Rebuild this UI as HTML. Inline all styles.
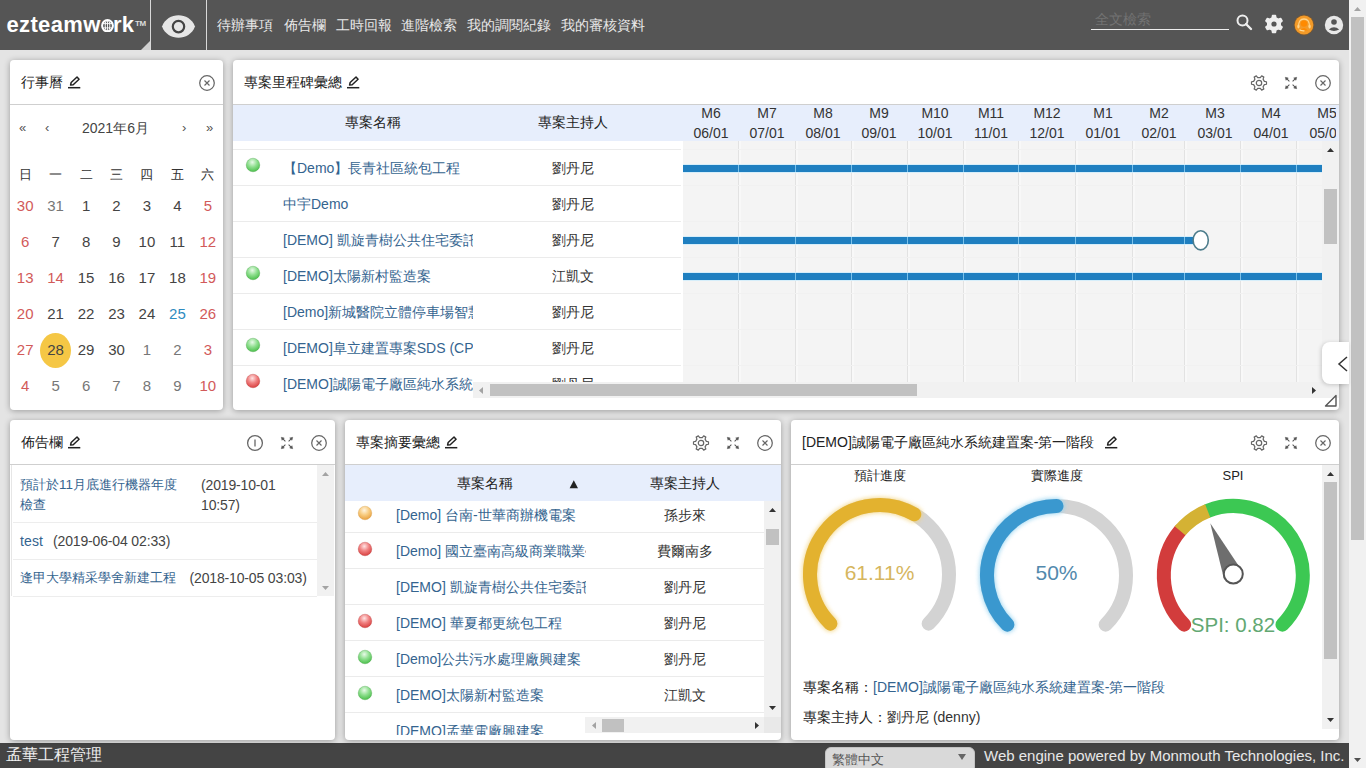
<!DOCTYPE html><html><head><meta charset="utf-8"><style>
*{box-sizing:border-box}
html,body{margin:0;padding:0}
body{width:1366px;height:768px;overflow:hidden;position:relative;background:#e4e4e4;font-family:"Liberation Sans",sans-serif;color:#333;font-size:14px}
.a{position:absolute;white-space:nowrap}
.sep{position:absolute;top:0;width:1px;height:50px;background:#d8d8d8}
.nav{position:absolute;top:17px;font-size:14px;line-height:16px;color:#e8e8e8;white-space:nowrap}
.panel{position:absolute;background:#fff;border-radius:4px;box-shadow:0 1px 6px rgba(0,0,0,.32)}
.t{position:absolute;white-space:nowrap;line-height:18px}
.c{text-align:center}
.lnk{color:#34648f}
</style></head><body>
<div class="a" style="left:0;top:0;width:1349px;height:50px;background:#555"></div>
<div class="a" style="left:6.5px;top:12px;font-size:22px;font-weight:bold;color:#fff;letter-spacing:0.35px;line-height:25px">ezteamw</div>
<svg class="a" style="left:100.5px;top:18.5px" width="13" height="13.5" viewBox="0 0 13 13.5"><ellipse cx="6.5" cy="6.75" rx="5.4" ry="5.7" fill="none" stroke="#fff" stroke-width="2"/><ellipse cx="6.5" cy="6.75" rx="2.3" ry="5.2" fill="none" stroke="#fff" stroke-width="1"/><path d="M1.5 4.6 L11.5 4.6 M1.5 8.9 L11.5 8.9 M6.5 1 L6.5 12.5" stroke="#fff" stroke-width="0.9"/></svg>
<div class="a" style="left:113px;top:12px;font-size:22px;font-weight:bold;color:#fff;letter-spacing:0.2px;line-height:25px">rk</div>
<div class="a" style="left:135px;top:19.5px;font-size:8px;font-weight:bold;color:#ddd;line-height:8px;letter-spacing:-0.3px">TM</div>
<svg class="a" style="left:141px;top:41px" width="9" height="9"><path d="M9 0 L9 9 L0 9 Z" fill="#d0d0d0"/></svg>
<div class="sep" style="left:150px"></div>
<svg class="a" style="left:160px;top:13px;overflow:visible" width="37" height="27" viewBox="0 0 37 27"><path d="M2 13.5 C7.5 -1.5 29.5 -1.5 35 13.5 C29.5 28.5 7.5 28.5 2 13.5 Z" fill="#e6e6e6"/><circle cx="18.5" cy="13.6" r="5.7" fill="none" stroke="#444" stroke-width="2.2"/></svg>
<div class="sep" style="left:206px"></div>
<div class="nav" style="left:217px">待辦事項</div>
<div class="nav" style="left:284px">佈告欄</div>
<div class="nav" style="left:336px">工時回報</div>
<div class="nav" style="left:401px">進階檢索</div>
<div class="nav" style="left:467px">我的調閱紀錄</div>
<div class="nav" style="left:561px">我的審核資料</div>
<div class="a" style="left:1095px;top:11px;font-size:14px;line-height:16px;color:#727272">全文檢索</div>
<div class="a" style="left:1091px;top:29px;width:138px;height:1px;background:#eee"></div>
<svg class="a" style="left:1234px;top:12px" width="20" height="20"><circle cx="8.5" cy="8.5" r="5" fill="none" stroke="#eee" stroke-width="2"/><path d="M12 12 L17 17" stroke="#eee" stroke-width="2.4" stroke-linecap="round"/></svg>
<svg class="a" style="left:1263.6px;top:14.2px" width="20" height="20"><g transform="rotate(-90 10 10)"><path d="M16.14 8.18 L18.48 8.57 L18.48 11.43 L16.14 11.82 L14.64 14.41 L15.48 16.63 L13.00 18.06 L11.49 16.22 L8.51 16.22 L7.00 18.06 L4.52 16.63 L5.36 14.41 L3.86 11.82 L1.52 11.43 L1.52 8.57 L3.86 8.18 L5.36 5.59 L4.52 3.37 L7.00 1.94 L8.51 3.78 L11.49 3.78 L13.00 1.94 L15.48 3.37 L14.64 5.59Z" fill="#eee" stroke="#eee" stroke-width="1.6" stroke-linejoin="round"/></g><circle cx="10" cy="10" r="2.6" fill="#555"/></svg>
<svg class="a" style="left:1292.7px;top:13.5px" width="22" height="22"><circle cx="11" cy="11" r="10.4" fill="#8a5a20" opacity=".55"/><circle cx="11" cy="11" r="9.4" fill="#f39a28"/><path d="M5.6 13 Q5.2 5 11 5 Q16.8 5 16.4 13" fill="none" stroke="#ffd48a" stroke-width="1.3"/><ellipse cx="5.4" cy="12.6" rx="1.1" ry="2" fill="#ffd48a"/><ellipse cx="16.6" cy="12.6" rx="1.1" ry="2" fill="#ffd48a"/><circle cx="11" cy="9.6" r="3.2" fill="#ff8a00"/><path d="M7.2 16.5 Q11 11.5 14.8 16.5 Z" fill="#ff8a00"/><path d="M6.5 15.8 Q8 17 11.5 16.8" fill="none" stroke="#ffe0a0" stroke-width="1.1"/></svg>
<svg class="a" style="left:1324px;top:15px" width="20" height="20"><circle cx="10" cy="10" r="9.2" fill="#e8e8e8"/><circle cx="10" cy="7" r="2.8" fill="#555"/><path d="M4.8 14.6 Q10 10 15.2 14.6 Q10 17.5 4.8 14.6Z" fill="#555"/></svg>
<div class="a" style="left:1349px;top:0;width:17px;height:768px;background:#f1f1f1"></div>
<div class="a" style="left:1351px;top:17px;width:13px;height:523px;background:#c1c1c1"></div>
<svg class="a" style="left:1353px;top:6px" width="9" height="6"><path d="M1 5 L4.5 1 L8 5Z" fill="#a3a3a3"/></svg>
<svg class="a" style="left:1353px;top:757px" width="9" height="6"><path d="M1 1 L4.5 5 L8 1Z" fill="#505050"/></svg>
<div class="a" style="left:0;top:743px;width:1349px;height:25px;background:#444"></div>
<div class="t" style="left:6px;top:745px;font-size:16px;line-height:20px;color:#f0f0f0">孟華工程管理</div>
<div class="a" style="left:825px;top:747px;width:150px;height:26px;border-radius:6px;background:#d9d9d9;border:1px solid #c4c4c4"></div>
<div class="t" style="left:832px;top:751.5px;font-size:13px;line-height:16px;color:#555">繁體中文</div>
<svg class="a" style="left:958px;top:754px" width="8" height="6"><path d="M0 0 L8 0 L4 6Z" fill="#666"/></svg>
<div class="t" style="left:984px;top:747px;font-size:15px;line-height:18px;color:#e8e8e8">Web engine powered by Monmouth Technologies, Inc.</div>
<div class="panel" style="left:10px;top:60px;width:213px;height:350px"></div>
<div class="panel" style="left:233px;top:60px;width:1106px;height:350px"></div>
<div class="panel" style="left:10px;top:420px;width:325px;height:320px"></div>
<div class="panel" style="left:345px;top:420px;width:436px;height:320px"></div>
<div class="panel" style="left:791px;top:420px;width:548px;height:320px"></div>
<svg width="0" height="0" style="position:absolute"><defs><radialGradient id="ggreen" cx="45%" cy="30%" r="70%"><stop offset="0" stop-color="#e8fae8"/><stop offset=".5" stop-color="#8fdf8f"/><stop offset="1" stop-color="#4cbf4c"/></radialGradient><radialGradient id="gred" cx="45%" cy="30%" r="70%"><stop offset="0" stop-color="#ffe4e4"/><stop offset=".5" stop-color="#f08080"/><stop offset="1" stop-color="#d84040"/></radialGradient><radialGradient id="gorange" cx="45%" cy="30%" r="70%"><stop offset="0" stop-color="#fff4e0"/><stop offset=".5" stop-color="#f8cc80"/><stop offset="1" stop-color="#e8a040"/></radialGradient></defs></svg>
<div class="t" style="left:21px;top:73px;font-size:14px;color:#222">行事曆</div>
<svg class="a" style="left:66.6px;top:74.8px" width="15" height="15" viewBox="0 0 15 15"><path d="M3.56 10.09 L6.19 9.69 L12.07 4.21 L10.03 2.01 L4.15 7.49 Z" fill="none" stroke="#222" stroke-width="1.5" stroke-linejoin="round"/><path d="M1 12.7 L13.3 12.7" stroke="#222" stroke-width="1.5"/></svg>
<div class="a" style="left:10px;top:104px;width:213px;height:1px;background:#cfcfcf"></div>
<svg class="a" style="left:198px;top:74px" width="18" height="18" viewBox="0 0 18 18"><circle cx="9" cy="9" r="7.3" fill="none" stroke="#666" stroke-width="1.25"/><path d="M6.5 6.5 L11.5 11.5 M11.5 6.5 L6.5 11.5" stroke="#666" stroke-width="1.15"/></svg>
<div class="t" style="left:19px;top:119px;font-size:13px;color:#555">«</div>
<div class="t" style="left:45px;top:119px;font-size:13px;color:#555">‹</div>
<div class="t" style="left:82px;top:119px;font-size:14px;color:#444">2021年6月</div>
<div class="t" style="left:182px;top:119px;font-size:13px;color:#555">›</div>
<div class="t" style="left:206px;top:119px;font-size:13px;color:#555">»</div>
<div class="t c" style="left:10.2px;top:166px;width:30px;font-size:13px;color:#333">日</div>
<div class="t c" style="left:40.6px;top:166px;width:30px;font-size:13px;color:#333">一</div>
<div class="t c" style="left:71.1px;top:166px;width:30px;font-size:13px;color:#333">二</div>
<div class="t c" style="left:101.5px;top:166px;width:30px;font-size:13px;color:#333">三</div>
<div class="t c" style="left:131.9px;top:166px;width:30px;font-size:13px;color:#333">四</div>
<div class="t c" style="left:162.4px;top:166px;width:30px;font-size:13px;color:#333">五</div>
<div class="t c" style="left:192.8px;top:166px;width:30px;font-size:13px;color:#333">六</div>
<div class="a" style="left:40px;top:333px;width:31px;height:35px;border-radius:50%;background:#f5c745"></div>
<div class="t c" style="left:10.2px;top:197px;width:30px;font-size:15px;color:#d25a5a">30</div>
<div class="t c" style="left:40.6px;top:197px;width:30px;font-size:15px;color:#777">31</div>
<div class="t c" style="left:71.1px;top:197px;width:30px;font-size:15px;color:#444">1</div>
<div class="t c" style="left:101.5px;top:197px;width:30px;font-size:15px;color:#444">2</div>
<div class="t c" style="left:131.9px;top:197px;width:30px;font-size:15px;color:#444">3</div>
<div class="t c" style="left:162.4px;top:197px;width:30px;font-size:15px;color:#444">4</div>
<div class="t c" style="left:192.8px;top:197px;width:30px;font-size:15px;color:#d25a5a">5</div>
<div class="t c" style="left:10.2px;top:233px;width:30px;font-size:15px;color:#d25a5a">6</div>
<div class="t c" style="left:40.6px;top:233px;width:30px;font-size:15px;color:#444">7</div>
<div class="t c" style="left:71.1px;top:233px;width:30px;font-size:15px;color:#444">8</div>
<div class="t c" style="left:101.5px;top:233px;width:30px;font-size:15px;color:#444">9</div>
<div class="t c" style="left:131.9px;top:233px;width:30px;font-size:15px;color:#444">10</div>
<div class="t c" style="left:162.4px;top:233px;width:30px;font-size:15px;color:#444">11</div>
<div class="t c" style="left:192.8px;top:233px;width:30px;font-size:15px;color:#d25a5a">12</div>
<div class="t c" style="left:10.2px;top:269px;width:30px;font-size:15px;color:#d25a5a">13</div>
<div class="t c" style="left:40.6px;top:269px;width:30px;font-size:15px;color:#d25a5a">14</div>
<div class="t c" style="left:71.1px;top:269px;width:30px;font-size:15px;color:#444">15</div>
<div class="t c" style="left:101.5px;top:269px;width:30px;font-size:15px;color:#444">16</div>
<div class="t c" style="left:131.9px;top:269px;width:30px;font-size:15px;color:#444">17</div>
<div class="t c" style="left:162.4px;top:269px;width:30px;font-size:15px;color:#444">18</div>
<div class="t c" style="left:192.8px;top:269px;width:30px;font-size:15px;color:#d25a5a">19</div>
<div class="t c" style="left:10.2px;top:305px;width:30px;font-size:15px;color:#d25a5a">20</div>
<div class="t c" style="left:40.6px;top:305px;width:30px;font-size:15px;color:#444">21</div>
<div class="t c" style="left:71.1px;top:305px;width:30px;font-size:15px;color:#444">22</div>
<div class="t c" style="left:101.5px;top:305px;width:30px;font-size:15px;color:#444">23</div>
<div class="t c" style="left:131.9px;top:305px;width:30px;font-size:15px;color:#444">24</div>
<div class="t c" style="left:162.4px;top:305px;width:30px;font-size:15px;color:#2e8bc0">25</div>
<div class="t c" style="left:192.8px;top:305px;width:30px;font-size:15px;color:#d25a5a">26</div>
<div class="t c" style="left:10.2px;top:341px;width:30px;font-size:15px;color:#d25a5a">27</div>
<div class="t c" style="left:40.6px;top:341px;width:30px;font-size:15px;color:#444">28</div>
<div class="t c" style="left:71.1px;top:341px;width:30px;font-size:15px;color:#444">29</div>
<div class="t c" style="left:101.5px;top:341px;width:30px;font-size:15px;color:#444">30</div>
<div class="t c" style="left:131.9px;top:341px;width:30px;font-size:15px;color:#777">1</div>
<div class="t c" style="left:162.4px;top:341px;width:30px;font-size:15px;color:#777">2</div>
<div class="t c" style="left:192.8px;top:341px;width:30px;font-size:15px;color:#d25a5a">3</div>
<div class="t c" style="left:10.2px;top:377px;width:30px;font-size:15px;color:#d25a5a">4</div>
<div class="t c" style="left:40.6px;top:377px;width:30px;font-size:15px;color:#777">5</div>
<div class="t c" style="left:71.1px;top:377px;width:30px;font-size:15px;color:#777">6</div>
<div class="t c" style="left:101.5px;top:377px;width:30px;font-size:15px;color:#777">7</div>
<div class="t c" style="left:131.9px;top:377px;width:30px;font-size:15px;color:#777">8</div>
<div class="t c" style="left:162.4px;top:377px;width:30px;font-size:15px;color:#777">9</div>
<div class="t c" style="left:192.8px;top:377px;width:30px;font-size:15px;color:#d25a5a">10</div>
<div class="t" style="left:244px;top:73px;font-size:14px;color:#222">專案里程碑彙總</div>
<svg class="a" style="left:345.7px;top:74.8px" width="15" height="15" viewBox="0 0 15 15"><path d="M3.56 10.09 L6.19 9.69 L12.07 4.21 L10.03 2.01 L4.15 7.49 Z" fill="none" stroke="#222" stroke-width="1.5" stroke-linejoin="round"/><path d="M1 12.7 L13.3 12.7" stroke="#222" stroke-width="1.5"/></svg>
<div class="a" style="left:233px;top:104px;width:1106px;height:1px;background:#cfcfcf"></div>
<svg class="a" style="left:1250px;top:74px" width="18" height="18" viewBox="0 0 18 18"><path d="M14.37 7.41 L16.49 7.73 L16.49 10.27 L14.37 10.59 L13.06 12.85 L13.84 14.86 L11.65 16.12 L10.31 14.45 L7.69 14.45 L6.35 16.12 L4.16 14.86 L4.94 12.85 L3.63 10.59 L1.51 10.27 L1.51 7.73 L3.63 7.41 L4.94 5.15 L4.16 3.14 L6.35 1.88 L7.69 3.55 L10.31 3.55 L11.65 1.88 L13.84 3.14 L13.06 5.15Z" fill="none" stroke="#666" stroke-width="1.2" stroke-linejoin="round"/><circle cx="9" cy="9" r="2.7" fill="none" stroke="#666" stroke-width="1.2"/></svg>
<svg class="a" style="left:1283px;top:75px" width="16" height="16" viewBox="0 0 16 16"><g stroke="#555" stroke-width="1.05" fill="#555"><path d="M3.4 3.4 L6.4 6.4 M12.6 3.4 L9.6 6.4 M3.4 12.6 L6.4 9.6 M12.6 12.6 L9.6 9.6"/><path d="M2.3 2.3 L5.3 3 L3 5.3Z M13.7 2.3 L10.7 3 L13 5.3Z M2.3 13.7 L5.3 13 L3 10.7Z M13.7 13.7 L10.7 13 L13 10.7Z" stroke-width="0.5"/></g></svg>
<svg class="a" style="left:1314px;top:74px" width="18" height="18" viewBox="0 0 18 18"><circle cx="9" cy="9" r="7.3" fill="none" stroke="#666" stroke-width="1.25"/><path d="M6.5 6.5 L11.5 11.5 M11.5 6.5 L6.5 11.5" stroke="#666" stroke-width="1.15"/></svg>
<div class="a" style="left:233px;top:105px;width:1106px;height:36px;background:#e7eefc"></div>
<div class="t c" style="left:313px;top:113px;width:120px;font-size:14px;color:#222">專案名稱</div>
<div class="t c" style="left:513px;top:113px;width:120px;font-size:14px;color:#222">專案主持人</div>
<div class="a" style="left:683px;top:105px;width:653px;height:36px;overflow:hidden">
<div class="t c" style="left:-2.0px;top:-1px;width:60px;font-size:14px;line-height:18px;color:#333">M6</div>
<div class="t c" style="left:-2.0px;top:19px;width:60px;font-size:14px;line-height:18px;color:#333">06/01</div>
<div class="t c" style="left:54.0px;top:-1px;width:60px;font-size:14px;line-height:18px;color:#333">M7</div>
<div class="t c" style="left:54.0px;top:19px;width:60px;font-size:14px;line-height:18px;color:#333">07/01</div>
<div class="t c" style="left:110.0px;top:-1px;width:60px;font-size:14px;line-height:18px;color:#333">M8</div>
<div class="t c" style="left:110.0px;top:19px;width:60px;font-size:14px;line-height:18px;color:#333">08/01</div>
<div class="t c" style="left:166.0px;top:-1px;width:60px;font-size:14px;line-height:18px;color:#333">M9</div>
<div class="t c" style="left:166.0px;top:19px;width:60px;font-size:14px;line-height:18px;color:#333">09/01</div>
<div class="t c" style="left:222.0px;top:-1px;width:60px;font-size:14px;line-height:18px;color:#333">M10</div>
<div class="t c" style="left:222.0px;top:19px;width:60px;font-size:14px;line-height:18px;color:#333">10/01</div>
<div class="t c" style="left:278.0px;top:-1px;width:60px;font-size:14px;line-height:18px;color:#333">M11</div>
<div class="t c" style="left:278.0px;top:19px;width:60px;font-size:14px;line-height:18px;color:#333">11/01</div>
<div class="t c" style="left:334.0px;top:-1px;width:60px;font-size:14px;line-height:18px;color:#333">M12</div>
<div class="t c" style="left:334.0px;top:19px;width:60px;font-size:14px;line-height:18px;color:#333">12/01</div>
<div class="t c" style="left:390.0px;top:-1px;width:60px;font-size:14px;line-height:18px;color:#333">M1</div>
<div class="t c" style="left:390.0px;top:19px;width:60px;font-size:14px;line-height:18px;color:#333">01/01</div>
<div class="t c" style="left:446.0px;top:-1px;width:60px;font-size:14px;line-height:18px;color:#333">M2</div>
<div class="t c" style="left:446.0px;top:19px;width:60px;font-size:14px;line-height:18px;color:#333">02/01</div>
<div class="t c" style="left:502.0px;top:-1px;width:60px;font-size:14px;line-height:18px;color:#333">M3</div>
<div class="t c" style="left:502.0px;top:19px;width:60px;font-size:14px;line-height:18px;color:#333">03/01</div>
<div class="t c" style="left:558.0px;top:-1px;width:60px;font-size:14px;line-height:18px;color:#333">M4</div>
<div class="t c" style="left:558.0px;top:19px;width:60px;font-size:14px;line-height:18px;color:#333">04/01</div>
<div class="t c" style="left:614.0px;top:-1px;width:60px;font-size:14px;line-height:18px;color:#333">M5</div>
<div class="t c" style="left:614.0px;top:19px;width:60px;font-size:14px;line-height:18px;color:#333">05/01</div>
</div>
<div class="a" style="left:683px;top:141px;width:639px;height:242px;background:#f4f4f4;overflow:hidden">
<div class="a" style="left:54.6px;top:0;width:1px;height:242px;background:#e2e2e2"></div>
<div class="a" style="left:55.6px;top:0;width:2px;height:242px;background:#f8f8f8"></div>
<div class="a" style="left:111.5px;top:0;width:1px;height:242px;background:#e2e2e2"></div>
<div class="a" style="left:112.5px;top:0;width:2px;height:242px;background:#f8f8f8"></div>
<div class="a" style="left:168.4px;top:0;width:1px;height:242px;background:#e2e2e2"></div>
<div class="a" style="left:169.4px;top:0;width:2px;height:242px;background:#f8f8f8"></div>
<div class="a" style="left:223.5px;top:0;width:1px;height:242px;background:#e2e2e2"></div>
<div class="a" style="left:224.5px;top:0;width:2px;height:242px;background:#f8f8f8"></div>
<div class="a" style="left:280.4px;top:0;width:1px;height:242px;background:#e2e2e2"></div>
<div class="a" style="left:281.4px;top:0;width:2px;height:242px;background:#f8f8f8"></div>
<div class="a" style="left:335.4px;top:0;width:1px;height:242px;background:#e2e2e2"></div>
<div class="a" style="left:336.4px;top:0;width:2px;height:242px;background:#f8f8f8"></div>
<div class="a" style="left:392.3px;top:0;width:1px;height:242px;background:#e2e2e2"></div>
<div class="a" style="left:393.3px;top:0;width:2px;height:242px;background:#f8f8f8"></div>
<div class="a" style="left:449.2px;top:0;width:1px;height:242px;background:#e2e2e2"></div>
<div class="a" style="left:450.2px;top:0;width:2px;height:242px;background:#f8f8f8"></div>
<div class="a" style="left:500.6px;top:0;width:1px;height:242px;background:#e2e2e2"></div>
<div class="a" style="left:501.6px;top:0;width:2px;height:242px;background:#f8f8f8"></div>
<div class="a" style="left:557.4px;top:0;width:1px;height:242px;background:#e2e2e2"></div>
<div class="a" style="left:558.4px;top:0;width:2px;height:242px;background:#f8f8f8"></div>
<div class="a" style="left:612.5px;top:0;width:1px;height:242px;background:#e2e2e2"></div>
<div class="a" style="left:613.5px;top:0;width:2px;height:242px;background:#f8f8f8"></div>
<div class="a" style="left:669.4px;top:0;width:1px;height:242px;background:#e2e2e2"></div>
<div class="a" style="left:670.4px;top:0;width:2px;height:242px;background:#f8f8f8"></div>
<div class="a" style="left:0;top:8px;width:639px;height:1px;background:#f1f1f1"></div>
<div class="a" style="left:0;top:44px;width:639px;height:1px;background:#f1f1f1"></div>
<div class="a" style="left:0;top:80px;width:639px;height:1px;background:#f1f1f1"></div>
<div class="a" style="left:0;top:116px;width:639px;height:1px;background:#f1f1f1"></div>
<div class="a" style="left:0;top:152px;width:639px;height:1px;background:#f1f1f1"></div>
<div class="a" style="left:0;top:188px;width:639px;height:1px;background:#f1f1f1"></div>
<div class="a" style="left:0;top:224px;width:639px;height:1px;background:#f1f1f1"></div>
<div class="a" style="left:0;top:23px;width:647px;height:9px;background:#d6eefa"></div>
<div class="a" style="left:0;top:24px;width:647px;height:7px;background:#1f7fc0"></div>
<div class="a" style="left:54.6px;top:24px;width:1px;height:7px;background:#7cc2ea"></div>
<div class="a" style="left:111.5px;top:24px;width:1px;height:7px;background:#7cc2ea"></div>
<div class="a" style="left:168.4px;top:24px;width:1px;height:7px;background:#7cc2ea"></div>
<div class="a" style="left:223.5px;top:24px;width:1px;height:7px;background:#7cc2ea"></div>
<div class="a" style="left:280.4px;top:24px;width:1px;height:7px;background:#7cc2ea"></div>
<div class="a" style="left:335.4px;top:24px;width:1px;height:7px;background:#7cc2ea"></div>
<div class="a" style="left:392.3px;top:24px;width:1px;height:7px;background:#7cc2ea"></div>
<div class="a" style="left:449.2px;top:24px;width:1px;height:7px;background:#7cc2ea"></div>
<div class="a" style="left:500.6px;top:24px;width:1px;height:7px;background:#7cc2ea"></div>
<div class="a" style="left:557.4px;top:24px;width:1px;height:7px;background:#7cc2ea"></div>
<div class="a" style="left:612.5px;top:24px;width:1px;height:7px;background:#7cc2ea"></div>
<div class="a" style="left:0;top:95px;width:511px;height:9px;background:#d6eefa"></div>
<div class="a" style="left:0;top:96px;width:511px;height:7px;background:#1f7fc0"></div>
<div class="a" style="left:54.6px;top:96px;width:1px;height:7px;background:#7cc2ea"></div>
<div class="a" style="left:111.5px;top:96px;width:1px;height:7px;background:#7cc2ea"></div>
<div class="a" style="left:168.4px;top:96px;width:1px;height:7px;background:#7cc2ea"></div>
<div class="a" style="left:223.5px;top:96px;width:1px;height:7px;background:#7cc2ea"></div>
<div class="a" style="left:280.4px;top:96px;width:1px;height:7px;background:#7cc2ea"></div>
<div class="a" style="left:335.4px;top:96px;width:1px;height:7px;background:#7cc2ea"></div>
<div class="a" style="left:392.3px;top:96px;width:1px;height:7px;background:#7cc2ea"></div>
<div class="a" style="left:449.2px;top:96px;width:1px;height:7px;background:#7cc2ea"></div>
<div class="a" style="left:500.6px;top:96px;width:1px;height:7px;background:#7cc2ea"></div>
<div class="a" style="left:0;top:131px;width:647px;height:9px;background:#d6eefa"></div>
<div class="a" style="left:0;top:132px;width:647px;height:7px;background:#1f7fc0"></div>
<div class="a" style="left:54.6px;top:132px;width:1px;height:7px;background:#7cc2ea"></div>
<div class="a" style="left:111.5px;top:132px;width:1px;height:7px;background:#7cc2ea"></div>
<div class="a" style="left:168.4px;top:132px;width:1px;height:7px;background:#7cc2ea"></div>
<div class="a" style="left:223.5px;top:132px;width:1px;height:7px;background:#7cc2ea"></div>
<div class="a" style="left:280.4px;top:132px;width:1px;height:7px;background:#7cc2ea"></div>
<div class="a" style="left:335.4px;top:132px;width:1px;height:7px;background:#7cc2ea"></div>
<div class="a" style="left:392.3px;top:132px;width:1px;height:7px;background:#7cc2ea"></div>
<div class="a" style="left:449.2px;top:132px;width:1px;height:7px;background:#7cc2ea"></div>
<div class="a" style="left:500.6px;top:132px;width:1px;height:7px;background:#7cc2ea"></div>
<div class="a" style="left:557.4px;top:132px;width:1px;height:7px;background:#7cc2ea"></div>
<div class="a" style="left:612.5px;top:132px;width:1px;height:7px;background:#7cc2ea"></div>
</div>
<svg class="a" style="left:1190px;top:228px" width="22" height="24"><ellipse cx="10.7" cy="12.3" rx="7.6" ry="9.6" fill="#fff" stroke="#4d7d8c" stroke-width="1.6"/></svg>
<div class="a" style="left:233px;top:141px;width:450px;height:242px;background:#fff;overflow:hidden">
<div class="a" style="left:0;top:8px;width:448px;height:1px;background:#ebebeb"></div>
<div class="a" style="left:0;top:44px;width:448px;height:1px;background:#ebebeb"></div>
<div class="a" style="left:0;top:80px;width:448px;height:1px;background:#ebebeb"></div>
<div class="a" style="left:0;top:116px;width:448px;height:1px;background:#ebebeb"></div>
<div class="a" style="left:0;top:152px;width:448px;height:1px;background:#ebebeb"></div>
<div class="a" style="left:0;top:188px;width:448px;height:1px;background:#ebebeb"></div>
<div class="a" style="left:0;top:224px;width:448px;height:1px;background:#ebebeb"></div>
</div>
<div class="a" style="left:233px;top:141px;width:240px;height:260px;overflow:hidden">
<div class="t lnk" style="left:50px;top:18px;font-size:14px">【Demo】長青社區統包工程</div>
<div class="t lnk" style="left:50px;top:54px;font-size:14px">中宇Demo</div>
<div class="t lnk" style="left:50px;top:90px;font-size:14px">[DEMO] 凱旋青樹公共住宅委託規劃</div>
<div class="t lnk" style="left:50px;top:126px;font-size:14px">[DEMO]太陽新村監造案</div>
<div class="t lnk" style="left:50px;top:162px;font-size:14px">[Demo]新城醫院立體停車場智慧</div>
<div class="t lnk" style="left:50px;top:198px;font-size:14px">[DEMO]阜立建置專案SDS (CPS)</div>
<div class="t lnk" style="left:50px;top:234px;font-size:14px">[DEMO]誠陽電子廠區純水系統建置案</div>
</div>
<div class="a" style="left:473px;top:141px;width:210px;height:241px;overflow:hidden">
<div class="t c" style="left:40px;top:18px;width:120px;font-size:14px;color:#333">劉丹尼</div>
<div class="t c" style="left:40px;top:54px;width:120px;font-size:14px;color:#333">劉丹尼</div>
<div class="t c" style="left:40px;top:90px;width:120px;font-size:14px;color:#333">劉丹尼</div>
<div class="t c" style="left:40px;top:126px;width:120px;font-size:14px;color:#333">江凱文</div>
<div class="t c" style="left:40px;top:162px;width:120px;font-size:14px;color:#333">劉丹尼</div>
<div class="t c" style="left:40px;top:198px;width:120px;font-size:14px;color:#333">劉丹尼</div>
<div class="t c" style="left:40px;top:234px;width:120px;font-size:14px;color:#333">劉丹尼</div>
</div>
<svg class="a" style="left:244.5px;top:157px" width="16" height="16"><circle cx="8" cy="8" r="6.8" fill="url(#ggreen)" stroke="#2a8f2a" stroke-opacity=".35" stroke-width=".8"/></svg>
<svg class="a" style="left:244.5px;top:265px" width="16" height="16"><circle cx="8" cy="8" r="6.8" fill="url(#ggreen)" stroke="#2a8f2a" stroke-opacity=".35" stroke-width=".8"/></svg>
<svg class="a" style="left:244.5px;top:337px" width="16" height="16"><circle cx="8" cy="8" r="6.8" fill="url(#ggreen)" stroke="#2a8f2a" stroke-opacity=".35" stroke-width=".8"/></svg>
<svg class="a" style="left:244.5px;top:373px" width="16" height="16"><circle cx="8" cy="8" r="6.8" fill="url(#gred)" stroke="#a82020" stroke-opacity=".35" stroke-width=".8"/></svg>
<div class="a" style="left:1322px;top:141px;width:17px;height:257px;background:#f1f1f1"></div>
<div class="a" style="left:1324px;top:189px;width:13px;height:55px;background:#c1c1c1"></div>
<svg class="a" style="left:1326px;top:147px" width="9" height="6"><path d="M1 5 L4.5 1 L8 5Z" fill="#333"/></svg>
<div class="a" style="left:473px;top:382px;width:849px;height:16px;background:#f1f1f1"></div>
<div class="a" style="left:490px;top:384px;width:427px;height:12px;background:#c1c1c1"></div>
<svg class="a" style="left:478px;top:386px" width="6" height="9"><path d="M5 1 L1 4.5 L5 8Z" fill="#a3a3a3"/></svg>
<svg class="a" style="left:1311px;top:386px" width="6" height="9"><path d="M1 1 L5 4.5 L1 8Z" fill="#333"/></svg>
<svg class="a" style="left:1324px;top:394px" width="14" height="14"><path d="M12 1.5 L12 12 L1.5 12 Z" fill="none" stroke="#555" stroke-width="1.4" stroke-linejoin="round"/></svg>
<div class="a" style="left:1322px;top:342px;width:27px;height:42px;background:#fff;border-radius:8px 0 0 8px;box-shadow:-1px 1px 4px rgba(0,0,0,.18)"></div>
<svg class="a" style="left:1337px;top:355px" width="12" height="18"><path d="M10 2 L2 9 L10 16" fill="none" stroke="#333" stroke-width="1.5"/></svg>
<div class="t" style="left:21px;top:433px;font-size:14px;color:#222">佈告欄</div>
<svg class="a" style="left:67.2px;top:434.8px" width="15" height="15" viewBox="0 0 15 15"><path d="M3.56 10.09 L6.19 9.69 L12.07 4.21 L10.03 2.01 L4.15 7.49 Z" fill="none" stroke="#222" stroke-width="1.5" stroke-linejoin="round"/><path d="M1 12.7 L13.3 12.7" stroke="#222" stroke-width="1.5"/></svg>
<div class="a" style="left:10px;top:464px;width:325px;height:1px;background:#cfcfcf"></div>
<svg class="a" style="left:246px;top:434px" width="18" height="18" viewBox="0 0 18 18"><circle cx="9" cy="9" r="7.4" fill="none" stroke="#666" stroke-width="1.3"/><path d="M9 5.5 L9 12.5" stroke="#666" stroke-width="1.3"/></svg>
<svg class="a" style="left:279px;top:435px" width="16" height="16" viewBox="0 0 16 16"><g stroke="#555" stroke-width="1.05" fill="#555"><path d="M3.4 3.4 L6.4 6.4 M12.6 3.4 L9.6 6.4 M3.4 12.6 L6.4 9.6 M12.6 12.6 L9.6 9.6"/><path d="M2.3 2.3 L5.3 3 L3 5.3Z M13.7 2.3 L10.7 3 L13 5.3Z M2.3 13.7 L5.3 13 L3 10.7Z M13.7 13.7 L10.7 13 L13 10.7Z" stroke-width="0.5"/></g></svg>
<svg class="a" style="left:310px;top:434px" width="18" height="18" viewBox="0 0 18 18"><circle cx="9" cy="9" r="7.3" fill="none" stroke="#666" stroke-width="1.25"/><path d="M6.5 6.5 L11.5 11.5 M11.5 6.5 L6.5 11.5" stroke="#666" stroke-width="1.15"/></svg>
<div class="a" style="left:11px;top:465px;width:1px;height:131px;background:#e6e6e6"></div>
<div class="t lnk" style="left:20px;top:475px;font-size:13.4px;line-height:20px">預計於11月底進行機器年度<br>檢查</div>
<div class="t" style="left:201px;top:475px;font-size:14px;line-height:20px;color:#444;letter-spacing:-0.15px">(2019-10-01<br>10:57)</div>
<div class="a" style="left:13px;top:522px;width:304px;height:1px;background:#ededed"></div>
<div class="t lnk" style="left:20px;top:532px;font-size:14px;letter-spacing:0.1px">test</div>
<div class="t" style="left:53px;top:532px;font-size:14px;color:#444;letter-spacing:-0.15px">(2019-06-04 02:33)</div>
<div class="a" style="left:13px;top:559px;width:304px;height:1px;background:#ededed"></div>
<div class="t lnk" style="left:20px;top:569px;font-size:13.4px">逢甲大學精采學舍新建工程</div>
<div class="t" style="left:189.5px;top:569px;font-size:14px;color:#444;letter-spacing:-0.15px">(2018-10-05 03:03)</div>
<div class="a" style="left:13px;top:596px;width:304px;height:1px;background:#ededed"></div>
<div class="a" style="left:317px;top:465px;width:17px;height:131px;background:#f1f1f1"></div>
<svg class="a" style="left:321px;top:471px" width="9" height="6"><path d="M1 5 L4.5 1 L8 5Z" fill="#a3a3a3"/></svg>
<svg class="a" style="left:321px;top:585px" width="9" height="6"><path d="M1 1 L4.5 5 L8 1Z" fill="#a3a3a3"/></svg>
<div class="t" style="left:356px;top:433px;font-size:14px;color:#222">專案摘要彙總</div>
<svg class="a" style="left:443.8px;top:434.8px" width="15" height="15" viewBox="0 0 15 15"><path d="M3.56 10.09 L6.19 9.69 L12.07 4.21 L10.03 2.01 L4.15 7.49 Z" fill="none" stroke="#222" stroke-width="1.5" stroke-linejoin="round"/><path d="M1 12.7 L13.3 12.7" stroke="#222" stroke-width="1.5"/></svg>
<div class="a" style="left:345px;top:464px;width:436px;height:1px;background:#cfcfcf"></div>
<svg class="a" style="left:692px;top:434px" width="18" height="18" viewBox="0 0 18 18"><path d="M14.37 7.41 L16.49 7.73 L16.49 10.27 L14.37 10.59 L13.06 12.85 L13.84 14.86 L11.65 16.12 L10.31 14.45 L7.69 14.45 L6.35 16.12 L4.16 14.86 L4.94 12.85 L3.63 10.59 L1.51 10.27 L1.51 7.73 L3.63 7.41 L4.94 5.15 L4.16 3.14 L6.35 1.88 L7.69 3.55 L10.31 3.55 L11.65 1.88 L13.84 3.14 L13.06 5.15Z" fill="none" stroke="#666" stroke-width="1.2" stroke-linejoin="round"/><circle cx="9" cy="9" r="2.7" fill="none" stroke="#666" stroke-width="1.2"/></svg>
<svg class="a" style="left:725px;top:435px" width="16" height="16" viewBox="0 0 16 16"><g stroke="#555" stroke-width="1.05" fill="#555"><path d="M3.4 3.4 L6.4 6.4 M12.6 3.4 L9.6 6.4 M3.4 12.6 L6.4 9.6 M12.6 12.6 L9.6 9.6"/><path d="M2.3 2.3 L5.3 3 L3 5.3Z M13.7 2.3 L10.7 3 L13 5.3Z M2.3 13.7 L5.3 13 L3 10.7Z M13.7 13.7 L10.7 13 L13 10.7Z" stroke-width="0.5"/></g></svg>
<svg class="a" style="left:756px;top:434px" width="18" height="18" viewBox="0 0 18 18"><circle cx="9" cy="9" r="7.3" fill="none" stroke="#666" stroke-width="1.25"/><path d="M6.5 6.5 L11.5 11.5 M11.5 6.5 L6.5 11.5" stroke="#666" stroke-width="1.15"/></svg>
<div class="a" style="left:345px;top:465px;width:436px;height:36px;background:#e7eefc"></div>
<div class="t c" style="left:425px;top:474px;width:120px;font-size:14px;color:#222">專案名稱</div>
<svg class="a" style="left:569px;top:480px" width="10" height="9"><path d="M0.6 8.3 L4.8 0.3 L9 8.3Z" fill="#222"/></svg>
<div class="t c" style="left:625px;top:474px;width:120px;font-size:14px;color:#222">專案主持人</div>
<div class="a" style="left:345px;top:501px;width:419px;height:216px;overflow:hidden">
<div class="a" style="left:0;top:31px;width:419px;height:1px;background:#ebebeb"></div>
<div class="a" style="left:0;top:67px;width:419px;height:1px;background:#ebebeb"></div>
<div class="a" style="left:0;top:103px;width:419px;height:1px;background:#ebebeb"></div>
<div class="a" style="left:0;top:139px;width:419px;height:1px;background:#ebebeb"></div>
<div class="a" style="left:0;top:175px;width:419px;height:1px;background:#ebebeb"></div>
<div class="a" style="left:0;top:211px;width:419px;height:1px;background:#ebebeb"></div>
<div class="a" style="left:0;top:247px;width:419px;height:1px;background:#ebebeb"></div>
<div class="t c" style="left:280px;top:5px;width:120px;font-size:14px;color:#333">孫步來</div>
<div class="t c" style="left:280px;top:41px;width:120px;font-size:14px;color:#333">費爾南多</div>
<div class="t c" style="left:280px;top:77px;width:120px;font-size:14px;color:#333">劉丹尼</div>
<div class="t c" style="left:280px;top:113px;width:120px;font-size:14px;color:#333">劉丹尼</div>
<div class="t c" style="left:280px;top:149px;width:120px;font-size:14px;color:#333">劉丹尼</div>
<div class="t c" style="left:280px;top:185px;width:120px;font-size:14px;color:#333">江凱文</div>
<div class="t c" style="left:280px;top:221px;width:120px;font-size:14px;color:#333">劉丹尼</div>
</div>
<div class="a" style="left:345px;top:501px;width:241px;height:234px;overflow:hidden">
<div class="t lnk" style="left:51px;top:5px;font-size:14px">[Demo] 台南-世華商辦機電案</div>
<div class="t lnk" style="left:51px;top:41px;font-size:14px">[Demo] 國立臺南高級商業職業學校</div>
<div class="t lnk" style="left:51px;top:77px;font-size:14px">[DEMO] 凱旋青樹公共住宅委託規劃</div>
<div class="t lnk" style="left:51px;top:113px;font-size:14px">[DEMO] 華夏都更統包工程</div>
<div class="t lnk" style="left:51px;top:149px;font-size:14px">[Demo]公共污水處理廠興建案</div>
<div class="t lnk" style="left:51px;top:185px;font-size:14px">[DEMO]太陽新村監造案</div>
<div class="t lnk" style="left:51px;top:221px;font-size:14px">[DEMO]孟華電廠興建案</div>
</div>
<svg class="a" style="left:357px;top:504.5px" width="16" height="16"><circle cx="8" cy="8" r="6.8" fill="url(#gorange)" stroke="#c98a2a" stroke-opacity=".35" stroke-width=".8"/></svg>
<svg class="a" style="left:357px;top:540.5px" width="16" height="16"><circle cx="8" cy="8" r="6.8" fill="url(#gred)" stroke="#a82020" stroke-opacity=".35" stroke-width=".8"/></svg>
<svg class="a" style="left:357px;top:612.5px" width="16" height="16"><circle cx="8" cy="8" r="6.8" fill="url(#gred)" stroke="#a82020" stroke-opacity=".35" stroke-width=".8"/></svg>
<svg class="a" style="left:357px;top:648.5px" width="16" height="16"><circle cx="8" cy="8" r="6.8" fill="url(#ggreen)" stroke="#2a8f2a" stroke-opacity=".35" stroke-width=".8"/></svg>
<svg class="a" style="left:357px;top:684.5px" width="16" height="16"><circle cx="8" cy="8" r="6.8" fill="url(#ggreen)" stroke="#2a8f2a" stroke-opacity=".35" stroke-width=".8"/></svg>
<div class="a" style="left:764px;top:501px;width:17px;height:216px;background:#f1f1f1"></div>
<div class="a" style="left:766px;top:529px;width:13px;height:16px;background:#c1c1c1"></div>
<svg class="a" style="left:768px;top:507px" width="9" height="6"><path d="M1 5 L4.5 1 L8 5Z" fill="#333"/></svg>
<svg class="a" style="left:768px;top:705px" width="9" height="6"><path d="M1 1 L4.5 5 L8 1Z" fill="#333"/></svg>
<div class="a" style="left:585px;top:717px;width:179px;height:16px;background:#f1f1f1"></div>
<div class="a" style="left:764px;top:717px;width:17px;height:16px;background:#e9e9e9"></div>
<div class="a" style="left:602px;top:719px;width:22px;height:13px;background:#c1c1c1"></div>
<svg class="a" style="left:591px;top:721px" width="6" height="9"><path d="M5 1 L1 4.5 L5 8Z" fill="#a3a3a3"/></svg>
<svg class="a" style="left:754px;top:721px" width="6" height="9"><path d="M1 1 L5 4.5 L1 8Z" fill="#333"/></svg>
<div class="t" style="left:802px;top:433px;font-size:14px;color:#222">[DEMO]誠陽電子廠區純水系統建置案-第一階段</div>
<svg class="a" style="left:1103.7px;top:434.8px" width="15" height="15" viewBox="0 0 15 15"><path d="M3.56 10.09 L6.19 9.69 L12.07 4.21 L10.03 2.01 L4.15 7.49 Z" fill="none" stroke="#222" stroke-width="1.5" stroke-linejoin="round"/><path d="M1 12.7 L13.3 12.7" stroke="#222" stroke-width="1.5"/></svg>
<div class="a" style="left:791px;top:464px;width:548px;height:1px;background:#cfcfcf"></div>
<svg class="a" style="left:1250px;top:434px" width="18" height="18" viewBox="0 0 18 18"><path d="M14.37 7.41 L16.49 7.73 L16.49 10.27 L14.37 10.59 L13.06 12.85 L13.84 14.86 L11.65 16.12 L10.31 14.45 L7.69 14.45 L6.35 16.12 L4.16 14.86 L4.94 12.85 L3.63 10.59 L1.51 10.27 L1.51 7.73 L3.63 7.41 L4.94 5.15 L4.16 3.14 L6.35 1.88 L7.69 3.55 L10.31 3.55 L11.65 1.88 L13.84 3.14 L13.06 5.15Z" fill="none" stroke="#666" stroke-width="1.2" stroke-linejoin="round"/><circle cx="9" cy="9" r="2.7" fill="none" stroke="#666" stroke-width="1.2"/></svg>
<svg class="a" style="left:1283px;top:435px" width="16" height="16" viewBox="0 0 16 16"><g stroke="#555" stroke-width="1.05" fill="#555"><path d="M3.4 3.4 L6.4 6.4 M12.6 3.4 L9.6 6.4 M3.4 12.6 L6.4 9.6 M12.6 12.6 L9.6 9.6"/><path d="M2.3 2.3 L5.3 3 L3 5.3Z M13.7 2.3 L10.7 3 L13 5.3Z M2.3 13.7 L5.3 13 L3 10.7Z M13.7 13.7 L10.7 13 L13 10.7Z" stroke-width="0.5"/></g></svg>
<svg class="a" style="left:1314px;top:434px" width="18" height="18" viewBox="0 0 18 18"><circle cx="9" cy="9" r="7.3" fill="none" stroke="#666" stroke-width="1.25"/><path d="M6.5 6.5 L11.5 11.5 M11.5 6.5 L6.5 11.5" stroke="#666" stroke-width="1.15"/></svg>
<div class="t c" style="left:819.5px;top:467px;width:120px;font-size:13px;color:#222">預計進度</div>
<div class="t c" style="left:996.5px;top:467px;width:120px;font-size:13px;color:#222">實際進度</div>
<div class="t c" style="left:1173px;top:467px;width:120px;font-size:13px;color:#222">SPI</div>
<svg class="a" style="left:791px;top:465px" width="531" height="275" viewBox="791 465 531 275"><defs><filter id="glow" x="-20%" y="-20%" width="140%" height="140%"><feGaussianBlur stdDeviation="2"/></filter></defs><path d="M830.36 623.64 A69.5 69.5 0 1 1 928.64 623.64" fill="none" stroke="#d3d3d3" stroke-width="14" stroke-linecap="round" /><path d="M830.36 623.64 A69.5 69.5 0 0 1 914.25 514.31" fill="none" stroke="#f3d27a" stroke-width="16" stroke-linecap="round" filter="url(#glow)" opacity=".8"/><path d="M830.36 623.64 A69.5 69.5 0 0 1 914.25 514.31" fill="none" stroke="#e3b22f" stroke-width="14" stroke-linecap="round" /><path d="M1007.36 624.64 A69.5 69.5 0 1 1 1105.64 624.64" fill="none" stroke="#d3d3d3" stroke-width="14" stroke-linecap="round" /><path d="M1007.36 624.64 A69.5 69.5 0 0 1 1056.50 506.00" fill="none" stroke="#8fd0f0" stroke-width="16" stroke-linecap="round" filter="url(#glow)" opacity=".8"/><path d="M1007.36 624.64 A69.5 69.5 0 0 1 1056.50 506.00" fill="none" stroke="#3a98cf" stroke-width="14" stroke-linecap="round" /><path d="M1207.72 510.88 A69.5 69.5 0 0 1 1282.44 624.64" fill="none" stroke="#3cc853" stroke-width="14" stroke-linecap="round" /><path d="M1184.16 624.64 A69.5 69.5 0 0 1 1180.06 530.83" fill="none" stroke="#d23c3c" stroke-width="14" stroke-linecap="round" /><path d="M1180.06 530.83 A69.5 69.5 0 0 1 1207.72 510.88" fill="none" stroke="#d4b234" stroke-width="14" stroke-linecap="butt" /><path d="M1210.30 523.35 L1224.15 579.54 L1242.45 571.46 Z" fill="#6e6e6e"/><circle cx="1233.3" cy="574.0" r="9.5" fill="#fff" stroke="#555" stroke-width="2"/></svg>
<div class="t c" style="left:819.5px;top:560px;width:120px;font-size:21px;line-height:26px;color:#d6b65e">61.11%</div>
<div class="t c" style="left:996.5px;top:560px;width:120px;font-size:21px;line-height:26px;color:#5289ad">50%</div>
<div class="t c" style="left:1173px;top:612px;width:120px;font-size:20.5px;line-height:26px;color:#62a872">SPI: 0.82</div>
<div class="t" style="left:803px;top:678px;font-size:14px;color:#222">專案名稱：<span class="lnk">[DEMO]誠陽電子廠區純水系統建置案-第一階段</span></div>
<div class="t" style="left:803px;top:708px;font-size:14px;color:#222">專案主持人：<span style="color:#333">劉丹尼 (denny)</span></div>
<div class="a" style="left:1322px;top:465px;width:17px;height:264px;background:#f1f1f1"></div>
<div class="a" style="left:1324px;top:482px;width:13px;height:177px;background:#c1c1c1"></div>
<svg class="a" style="left:1326px;top:471px" width="9" height="6"><path d="M1 5 L4.5 1 L8 5Z" fill="#333"/></svg>
<svg class="a" style="left:1326px;top:717px" width="9" height="6"><path d="M1 1 L4.5 5 L8 1Z" fill="#333"/></svg>
</body></html>
